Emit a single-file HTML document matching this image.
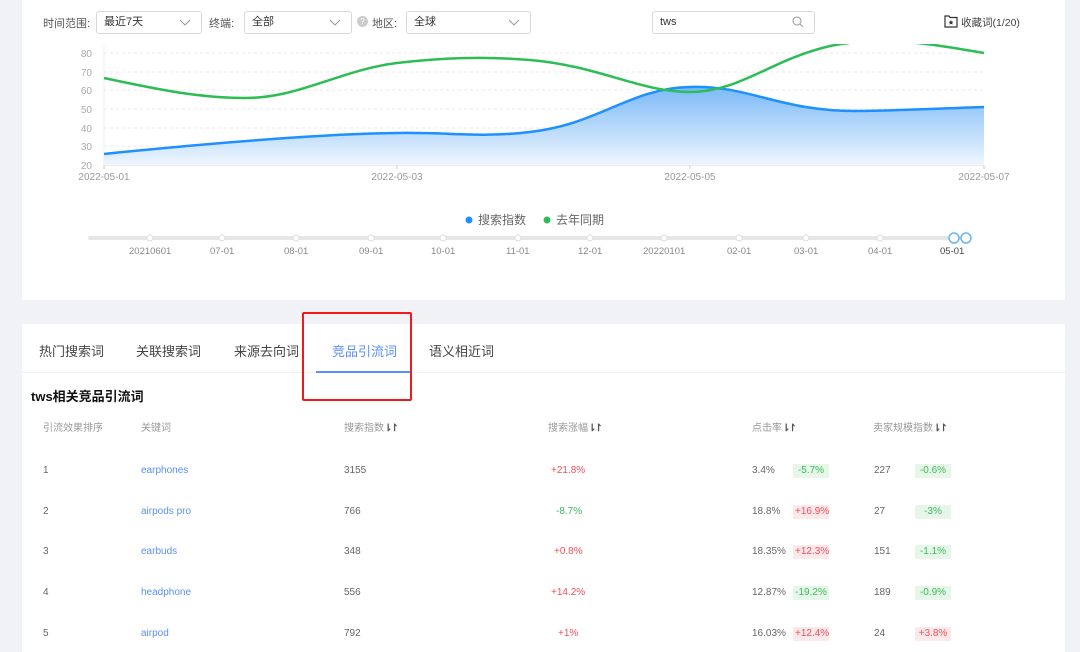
<!DOCTYPE html>
<html><head><meta charset="utf-8"><style>
*{margin:0;padding:0;box-sizing:border-box}
body{width:1080px;height:652px;background:#f1f2f6;font-family:"Liberation Sans","Noto Sans CJK SC",sans-serif;position:relative;overflow:hidden;color:#555}
.p{position:absolute;background:#fff}
.a{position:absolute;white-space:nowrap}
.sel{position:absolute;top:11px;height:23px;border:1px solid #d9d9d9;border-radius:3px;font-size:11px;color:#333;padding:4px 7px;line-height:13px}
.sel svg{position:absolute;right:10px;top:7px}
.lbl{font-size:11px;color:#555;top:15px}
.tl{font-size:9.5px;color:#888;top:246px}
.tab{font-size:13px;color:#444;top:341px}
.th{font-size:10px;color:#999;top:419px}
.td{font-size:10px;color:#666}
.kw{color:#5b8ff9}
.tag{position:absolute;font-size:10px;padding:1px 2px;height:14px;line-height:12px;width:36px;text-align:center}
.g{background:#e6f7e9;color:#3cb95a}.r{background:#fde8ea;color:#f0505a}
</style></head><body>
<div class="p" style="left:22px;top:0;width:1043px;height:300px"></div>
<div class="p" style="left:22px;top:324px;width:1043px;height:328px"></div>

<div class="a lbl" style="left:43px">时间范围:</div>
<div class="sel" style="left:96px;width:106px">最近7天<svg width="12" height="8"><path d="M1 1l5 5 5-5" fill="none" stroke="#999"/></svg></div>
<div class="a lbl" style="left:209px">终端:</div>
<div class="sel" style="left:244px;width:108px">全部<svg width="12" height="8"><path d="M1 1l5 5 5-5" fill="none" stroke="#999"/></svg></div>
<div class="a" style="left:357px;top:16px;width:11px;height:11px;border-radius:50%;background:#ccc;color:#fff;font-size:8px;text-align:center;line-height:11px">?</div>
<div class="a lbl" style="left:372px">地区:</div>
<div class="sel" style="left:406px;width:125px">全球<svg width="12" height="8"><path d="M1 1l5 5 5-5" fill="none" stroke="#999"/></svg></div>
<div class="sel" style="left:652px;width:163px">tws<svg width="12" height="12" style="top:4px"><circle cx="5" cy="5" r="4" fill="none" stroke="#999"/><path d="M8 8l3 3" stroke="#999"/></svg></div>
<svg class="a" style="left:944px;top:14px" width="14" height="14"><path d="M1 2h4l1 1.5h7v9.5h-12z" fill="none" stroke="#333" stroke-width="1.2"/><path d="M7 6l.8 1.6 1.7.2-1.3 1.1.4 1.7L7 9.7l-1.6.9.4-1.7-1.3-1.1 1.7-.2z" fill="#333"/></svg>
<div class="a" style="left:961px;top:15px;font-size:10.5px;color:#444">收藏词(1/20)</div>

<svg class="a" style="left:0;top:0" width="1080" height="270">
<defs><linearGradient id="gr" x1="0" y1="0" x2="0" y2="1"><stop offset="0" stop-color="#7cb9f8"/><stop offset="1" stop-color="#eef6fe"/></linearGradient>
<clipPath id="c"><rect x="100" y="44" width="890" height="130"/></clipPath></defs>
<g stroke="#e8e8e8" stroke-dasharray="3,3">
<line x1="104" y1="53" x2="984" y2="53"/><line x1="104" y1="72" x2="984" y2="72"/><line x1="104" y1="90" x2="984" y2="90"/><line x1="104" y1="109" x2="984" y2="109"/><line x1="104" y1="128" x2="984" y2="128"/><line x1="104" y1="146" x2="984" y2="146"/></g>
<line x1="104" y1="46" x2="104" y2="165" stroke="#eee"/>
<line x1="104" y1="165" x2="984" y2="165" stroke="#ddd"/>
<g stroke="#ccc"><line x1="104" y1="165" x2="104" y2="169"/><line x1="397" y1="165" x2="397" y2="169"/><line x1="690" y1="165" x2="690" y2="169"/><line x1="984" y1="165" x2="984" y2="169"/></g>
<g clip-path="url(#c)">
<path d="M104 154C200 144 320 134 397 133C450 132 480 138 530 132C600 124 630 88 690 87C750 85 780 112 860 111C920 110 950 108 984 107L984 165L104 165Z" fill="url(#gr)"/>
<path d="M104 154C200 144 320 134 397 133C450 132 480 138 530 132C600 124 630 88 690 87C750 85 780 112 860 111C920 110 950 108 984 107" fill="none" stroke="#1e90ff" stroke-width="2.5"/>
<path d="M104 78C160 90 200 98 245 98C300 98 340 70 397 63C440 58 480 56 530 60C600 66 640 92 690 92C740 92 770 60 830 46C880 36 920 42 984 53" fill="none" stroke="#2dbd55" stroke-width="2.5"/>
</g>
<g font-size="10" fill="#aaa" font-family="Liberation Sans" text-anchor="end">
<text x="92" y="57">80</text><text x="92" y="76">70</text><text x="92" y="94">60</text><text x="92" y="113">50</text><text x="92" y="132">40</text><text x="92" y="150">30</text><text x="92" y="169">20</text></g>
<g font-size="10" fill="#999" font-family="Liberation Sans" text-anchor="middle">
<text x="104" y="180">2022-05-01</text><text x="397" y="180">2022-05-03</text><text x="690" y="180">2022-05-05</text><text x="984" y="180">2022-05-07</text></g>
<circle cx="469" cy="220" r="3.5" fill="#1e90ff"/><circle cx="547" cy="220" r="3.5" fill="#2dbd55"/>
<text x="478" y="224" font-size="12" fill="#666" font-family="Noto Sans CJK SC, sans-serif">搜索指数</text>
<text x="556" y="224" font-size="12" fill="#666" font-family="Noto Sans CJK SC, sans-serif">去年同期</text>
<line x1="90" y1="238" x2="965" y2="238" stroke="#e6e6e6" stroke-width="4" stroke-linecap="round"/>
<g fill="#fff" stroke="#ddd"><circle cx="150" cy="238" r="3"/><circle cx="222" cy="238" r="3"/><circle cx="296" cy="238" r="3"/><circle cx="371" cy="238" r="3"/><circle cx="443" cy="238" r="3"/><circle cx="518" cy="238" r="3"/><circle cx="590" cy="238" r="3"/><circle cx="664" cy="238" r="3"/><circle cx="739" cy="238" r="3"/><circle cx="806" cy="238" r="3"/><circle cx="880" cy="238" r="3"/></g>
<g fill="#fff" stroke="#6bb3f5" stroke-width="1.5"><circle cx="954" cy="238" r="5"/><circle cx="966" cy="238" r="5"/></g>
</svg>
<div class="a tl" style="left:129px">20210601</div><div class="a tl" style="left:210px">07-01</div><div class="a tl" style="left:284px">08-01</div><div class="a tl" style="left:359px">09-01</div><div class="a tl" style="left:431px">10-01</div><div class="a tl" style="left:506px">11-01</div><div class="a tl" style="left:578px">12-01</div><div class="a tl" style="left:643px">20220101</div><div class="a tl" style="left:727px">02-01</div><div class="a tl" style="left:794px">03-01</div><div class="a tl" style="left:868px">04-01</div><div class="a tl" style="left:940px;color:#444">05-01</div>

<div class="a tab" style="left:39px">热门搜索词</div>
<div class="a tab" style="left:136px">关联搜索词</div>
<div class="a tab" style="left:234px">来源去向词</div>
<div class="a tab" style="left:332px;color:#5b8ff9">竞品引流词</div>
<div class="a tab" style="left:429px">语义相近词</div>
<div class="a" style="left:22px;top:372px;width:1043px;height:1px;background:#eef0f4"></div>
<div class="a" style="left:316px;top:371px;width:95px;height:2px;background:#5b8ff9"></div>
<div class="a" style="left:302px;top:312px;width:110px;height:89px;border:2px solid #f01a1a;border-radius:2px"></div>
<div class="a" style="left:31px;top:386px;font-size:13px;font-weight:bold;color:#111">tws相关竞品引流词</div>

<div class="a th" style="left:43px">引流效果排序</div><div class="a th" style="left:141px">关键词</div><div class="a th" style="left:344px">搜索指数<b style="color:#555;letter-spacing:-2px">⇂↾</b></div><div class="a th" style="left:548px">搜索涨幅<b style="color:#555;letter-spacing:-2px">⇂↾</b></div><div class="a th" style="left:752px">点击率<b style="color:#555;letter-spacing:-2px">⇂↾</b></div><div class="a th" style="left:873px">卖家规模指数<b style="color:#555;letter-spacing:-2px">⇂↾</b></div>

<div class="a td" style="left:43px;top:465px">1</div><div class="a td kw" style="left:141px;top:465px">earphones</div><div class="a td" style="left:344px;top:465px">3155</div><div class="a td" style="left:551px;top:465px;color:#f0505a">+21.8%</div><div class="a td" style="left:752px;top:465px">3.4%</div><div class="tag g" style="left:793px;top:464px">-5.7%</div><div class="a td" style="left:874px;top:465px">227</div><div class="tag g" style="left:915px;top:464px">-0.6%</div>
<div class="a td" style="left:43px;top:506px">2</div><div class="a td kw" style="left:141px;top:506px">airpods pro</div><div class="a td" style="left:344px;top:506px">766</div><div class="a td" style="left:556px;top:506px;color:#3cb95a">-8.7%</div><div class="a td" style="left:752px;top:506px">18.8%</div><div class="tag r" style="left:793px;top:505px">+16.9%</div><div class="a td" style="left:874px;top:506px">27</div><div class="tag g" style="left:915px;top:505px">-3%</div>
<div class="a td" style="left:43px;top:546px">3</div><div class="a td kw" style="left:141px;top:546px">earbuds</div><div class="a td" style="left:344px;top:546px">348</div><div class="a td" style="left:554px;top:546px;color:#f0505a">+0.8%</div><div class="a td" style="left:752px;top:546px">18.35%</div><div class="tag r" style="left:793px;top:545px">+12.3%</div><div class="a td" style="left:874px;top:546px">151</div><div class="tag g" style="left:915px;top:545px">-1.1%</div>
<div class="a td" style="left:43px;top:587px">4</div><div class="a td kw" style="left:141px;top:587px">headphone</div><div class="a td" style="left:344px;top:587px">556</div><div class="a td" style="left:551px;top:587px;color:#f0505a">+14.2%</div><div class="a td" style="left:752px;top:587px">12.87%</div><div class="tag g" style="left:793px;top:586px">-19.2%</div><div class="a td" style="left:874px;top:587px">189</div><div class="tag g" style="left:915px;top:586px">-0.9%</div>
<div class="a td" style="left:43px;top:628px">5</div><div class="a td kw" style="left:141px;top:628px">airpod</div><div class="a td" style="left:344px;top:628px">792</div><div class="a td" style="left:558px;top:628px;color:#f0505a">+1%</div><div class="a td" style="left:752px;top:628px">16.03%</div><div class="tag r" style="left:793px;top:627px">+12.4%</div><div class="a td" style="left:874px;top:628px">24</div><div class="tag r" style="left:915px;top:627px">+3.8%</div>
</body></html>
